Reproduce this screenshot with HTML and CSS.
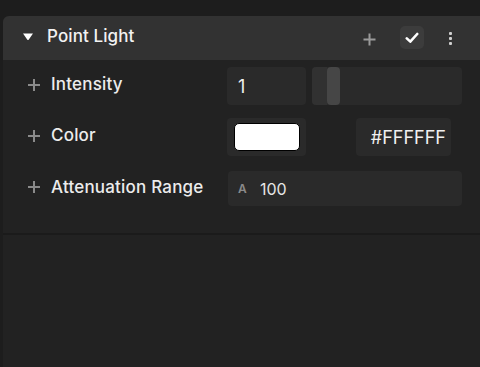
FILE: index.html
```html
<!DOCTYPE html>
<html lang="en">
<head>
  <meta charset="UTF-8" />
  <title>Point Light</title>
  <link rel="stylesheet" href="styles.css">
</head>
<body>
  <div class="panel">
    <!-- Component header -->
    <div class="header">
      <svg class="caret" width="12" height="9" viewBox="0 0 12 9">
        <path d="M1 1.5 H11 L6.8 7.6 Q6 8.6 5.2 7.6 Z" fill="#fff"/>
      </svg>
      <span class="title">Point Light</span>
      <div class="tools">
        <svg class="tool-plus" width="13" height="13" viewBox="0 0 13 13">
          <path d="M6.5 0.5 V12.5 M0.5 6.5 H12.5" stroke="#9a9a9a" stroke-width="2"/>
        </svg>
        <div class="check-btn">
          <svg width="14" height="12" viewBox="0 0 14 12">
            <path d="M1.8 6.4 L5.3 9.6 L12.2 2" stroke="#fff" stroke-width="2.6" fill="none" stroke-linecap="round" stroke-linejoin="round"/>
          </svg>
        </div>
        <div class="kebab"><i></i><i></i><i></i></div>
      </div>
    </div>

    <div class="props">
      <div class="row">
        <div class="label"><svg class="plus" width="12" height="12" viewBox="0 0 12 12"><path d="M6 0 V12 M0 6 H12" stroke="#8a8a8a" stroke-width="2"/></svg>Intensity</div>
        <div class="fields">
          <div class="num-input">1</div>
          <div class="slider">
            <div class="fill"></div>
            <div class="thumb"></div>
          </div>
        </div>
      </div>

      <div class="row">
        <div class="label"><svg class="plus" width="12" height="12" viewBox="0 0 12 12"><path d="M6 0 V12 M0 6 H12" stroke="#8a8a8a" stroke-width="2"/></svg>Color</div>
        <div class="fields">
          <div class="swatch-box"><div class="swatch"></div></div>
          <div class="hex-input">#FFFFFF</div>
        </div>
      </div>

      <div class="row row-short">
        <div class="label"><svg class="plus" width="12" height="12" viewBox="0 0 12 12"><path d="M6 0 V12 M0 6 H12" stroke="#8a8a8a" stroke-width="2"/></svg>Attenuation Range</div>
        <div class="fields">
          <div class="wide-input"><span class="prefix">A</span>100</div>
        </div>
      </div>
    </div>
  </div>
</body>
</html>
```

FILE: styles.css
```css
html, body {
  margin: 0;
  height: 100%;
}
body {
  background-color: #1d1d1d;
  font-family: Inter, "Noto Sans", sans-serif;
  color: #ececec;
  padding-top: 16px;
  box-sizing: border-box;
  overflow: hidden;
}
.panel {
  margin-left: 3px;
  background-color: #222222;
  border-top-left-radius: 6px;
  height: 100%;
}
/* Header */
.header {
  height: 44px;
  background-color: #323232;
  border-top-left-radius: 6px;
  display: flex;
  align-items: center;
  padding-left: 19px;
  padding-right: 28px;
}
.caret {
  margin-bottom: 3px;
}
.title {
  margin-left: 13px;
  margin-bottom: 4px;
  font-size: 17px;
  font-weight: 500;
  letter-spacing: 0.1px;
  color: #f2f2f2;
  flex: 1;
}
.tools {
  display: flex;
  align-items: center;
}
.tool-plus {
  margin-right: 24px;
  margin-top: 2px;
}
.check-btn {
  width: 24px;
  height: 23px;
  border-radius: 5px;
  background-color: #3c3c3c;
  display: flex;
  align-items: center;
  justify-content: center;
  margin-right: 25px;
  margin-bottom: 1px;
}
.kebab {
  display: flex;
  flex-direction: column;
  gap: 2px;
}
.kebab i {
  display: block;
  width: 3px;
  height: 3px;
  border-radius: 1px;
  background-color: #cfcfcf;
}
/* Properties */
.props {
  padding: 7px 18px 27px 0;
  display: flex;
  flex-direction: column;
  gap: 13px;
  border-bottom: 2px solid #1b1b1b;
}
.row {
  display: flex;
  align-items: center;
  height: 38px;
}
.row-short {
  height: 35px;
  margin-top: 2px;
}
.label {
  width: 224px;
  display: flex;
  align-items: center;
  padding-bottom: 4px;
  font-size: 17px;
  font-weight: 500;
  letter-spacing: 0.2px;
  color: #ececec;
}
.plus {
  margin-left: 25px;
  margin-right: 11px;
  margin-top: 1px;
}
.fields {
  flex: 1;
  display: flex;
  height: 100%;
}
.num-input {
  width: 79px;
  background-color: #2a2a2a;
  border-radius: 4px;
  display: flex;
  align-items: center;
  padding-left: 11px;
  box-sizing: border-box;
  font-size: 18px;
  color: #f0f0f0;
}
.slider {
  margin-left: 6px;
  flex: 1;
  background-color: #2a2a2a;
  border-radius: 4px;
  display: flex;
  overflow: hidden;
}
.fill {
  width: 15px;
  background-color: #313131;
}
.thumb {
  width: 13px;
  background-color: #464646;
  border-radius: 4px;
}
.swatch-box {
  width: 79px;
  background-color: #2a2a2a;
  border-radius: 4px;
  display: flex;
  align-items: center;
  justify-content: center;
}
.swatch {
  width: 66px;
  height: 28px;
  background-color: #ffffff;
  border: 1px solid #000;
  border-radius: 5px;
  box-sizing: border-box;
}
.hex-input {
  margin-left: 50px;
  width: 95px;
  background-color: #2a2a2a;
  border-radius: 4px;
  display: flex;
  align-items: center;
  justify-content: flex-end;
  padding-right: 5px;
  box-sizing: border-box;
  font-size: 18px;
  color: #f0f0f0;
}
.wide-input {
  margin-left: 1px;
  flex: 1;
  background-color: #2a2a2a;
  border-radius: 4px;
  display: flex;
  align-items: center;
  padding-left: 10px;
  font-size: 16px;
  color: #e6e6e6;
}
.prefix {
  font-size: 12px;
  font-weight: 600;
  color: #8a8a8a;
  width: 22px;
}
```
